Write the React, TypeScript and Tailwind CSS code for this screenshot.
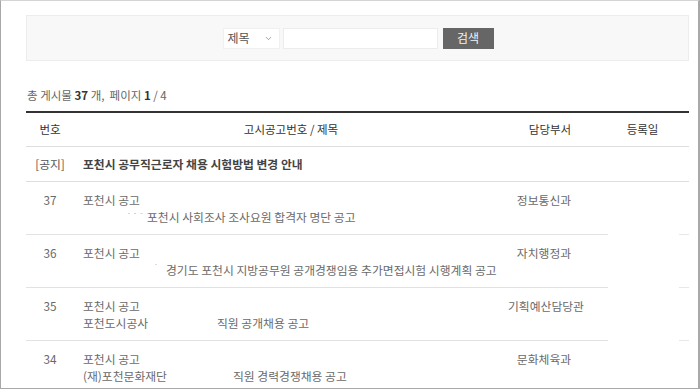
import { ChevronDown } from "lucide-react";

type Row = {
  n: string;
  org: string;
  orgW: number;
  title: string;
  dept: string;
  dots?: "a" | "b";
};

const rows: Row[] = [
  { n: "37", org: "", orgW: 64, title: "포천시 사회조사 조사요원 합격자 명단 공고", dept: "정보통신과", dots: "a" },
  { n: "36", org: "", orgW: 83, title: "경기도 포천시 지방공무원 공개경쟁임용 추가면접시험 시행계획 공고", dept: "자치행정과", dots: "b" },
  { n: "35", org: "포천도시공사", orgW: 134, title: "직원 공개채용 공고", dept: "기획예산담당관" },
  { n: "34", org: "(재)포천문화재단", orgW: 150, title: "직원 경력경쟁채용 공고", dept: "문화체육과" },
];

export default function App() {
  return (
    <div className="w-[700px] h-[389px] overflow-hidden bg-white border border-[#a8a8a8] border-t-[#d4d4d4] border-r-2 font-['Noto_Sans_CJK_KR','Noto_Sans',sans-serif]">
      <div className="pl-[25px] pr-[9px] pt-[14px]">
        {/* search box */}
        <div className="h-[46px] bg-[#f8f8f8] border border-[#ececec] flex items-center justify-center pl-px">
          <div className="w-[57px] h-[21px] bg-white border border-[#f0f0f0] flex items-center justify-between pl-[4px] pr-[6px] text-[12px] text-[#555]">
            <span>제목</span>
            <ChevronDown size={9} strokeWidth={1.6} className="text-[#666]" />
          </div>
          <div className="ml-[3px] w-[155px] h-[21px] bg-white border border-[#ececec]" />
          <div className="ml-[5px] w-[51px] h-[21px] bg-[#666666] flex items-center justify-center text-[12px] text-[#f2f2f2]">
            검색
          </div>
        </div>

        {/* count */}
        <div className="mt-[26px] pl-[1px] text-[11.5px] leading-[17px] text-[#666]">
          총 게시물 <b className="font-bold text-[#333]">37</b> 개,&nbsp; 페이지 <b className="font-bold text-[#333]">1</b> / 4
        </div>

        {/* table */}
        <div className="mt-[7px] border-t-2 border-[#333]">
          <div className="grid grid-cols-[48px_434px_88px_93px] h-[34px] items-center border-b border-[#dedede] text-[11.5px] text-[#333]">
            <div className="text-center">번호</div>
            <div className="text-center">고시공고번호 / 제목</div>
            <div className="text-center pr-[4px]">담당부서</div>
            <div className="text-center">등록일</div>
          </div>
          <div className="grid grid-cols-[48px_434px_88px_93px] h-[35px] items-center border-b border-[#dedede] text-[11.8px]">
            <div className="text-center text-[#555]">[공지]</div>
            <div className="pl-[9px] font-semibold text-[#444]">포천시 공무직근로자 채용 시험방법 변경 안내</div>
            <div />
            <div />
          </div>
          {rows.map((r) => (
            <div key={r.n} className="grid grid-cols-[48px_434px_88px_93px] text-[11.8px] leading-[17px] text-[#6a6a6a]">
              <div className="border-b border-[#e2e2e2] py-[9px] text-center">{r.n}</div>
              <div className="border-b border-[#e2e2e2] py-[9px] pl-[9px]">
                <div>포천시 공고</div>
                <div className="flex">
                  <span className="shrink-0 flex items-center whitespace-nowrap" style={{ width: r.orgW }}>
                    {r.org}
                    {r.dots === "a" && (
                      <span className="flex items-center gap-[4px] ml-[45px] mt-[-6px]">
                        <span className="w-[2px] h-[1px] bg-[#d8d8d8]" />
                        <span className="w-[2px] h-[1px] bg-[#d0d0d0]" />
                        <span className="w-[3px] h-[1px] bg-[#e0e0e0]" />
                        <span className="w-[2px] h-[1px] bg-[#d8d8d8]" />
                      </span>
                    )}
                    {r.dots === "b" && (
                      <span className="flex items-center ml-[72px] mt-[-10px]">
                        <span className="w-[2px] h-[1px] bg-[#dcdcdc]" />
                      </span>
                    )}
                  </span>
                  <span className="whitespace-nowrap">{r.title}</span>
                </div>
              </div>
              <div className="border-b border-[#e2e2e2] py-[9px] text-center pr-[16px] whitespace-nowrap">{r.dept}</div>
              <div className="flex items-end">
                <div className="w-[12px] border-b border-[#e2e2e2]" />
                <div className="flex-1" />
                <div className="w-[10px] border-b border-[#e8e8e8]" />
              </div>
            </div>
          ))}
        </div>
      </div>
    </div>
  );
}
